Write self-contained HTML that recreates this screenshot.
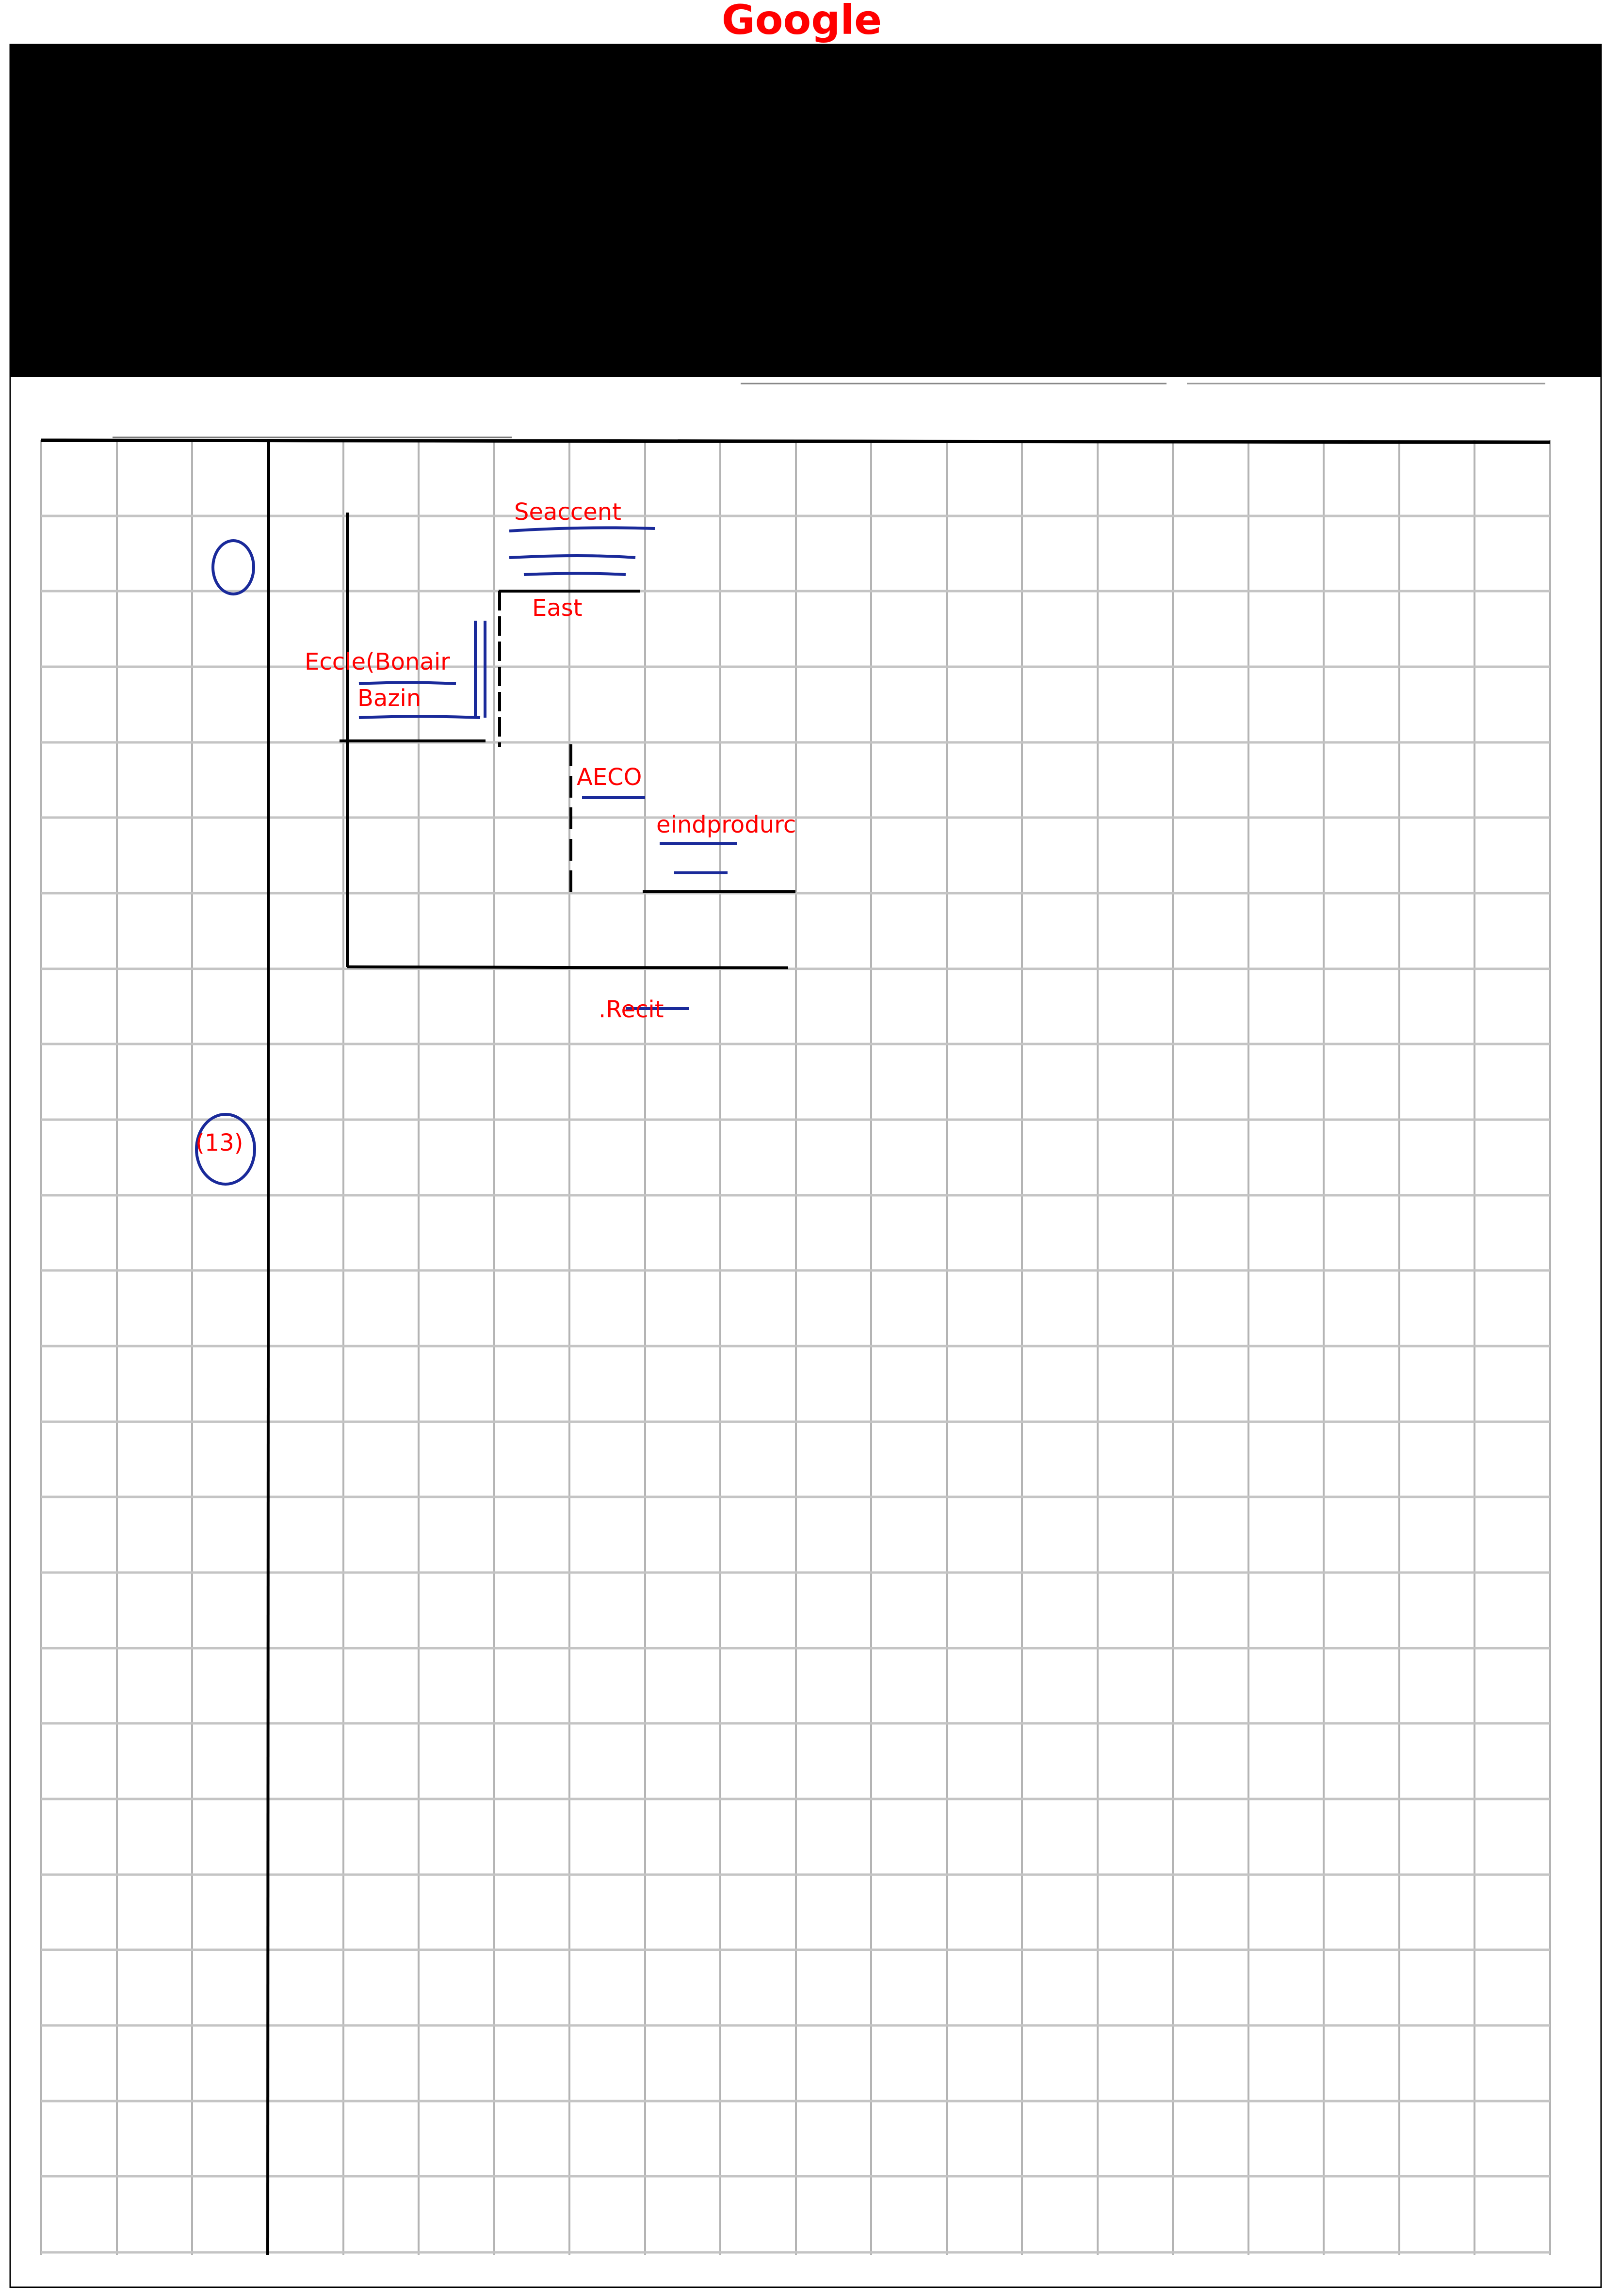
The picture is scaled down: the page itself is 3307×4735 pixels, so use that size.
<!DOCTYPE html>
<html><head><meta charset="utf-8">
<style>
html,body{margin:0;padding:0;background:#fff;width:3307px;height:4735px;overflow:hidden}
svg{display:block}
</style></head>
<body>
<svg width="3307" height="4735" viewBox="0 0 3307 4735" xmlns="http://www.w3.org/2000/svg">
<rect width="3307" height="4735" fill="#fff"/>
<text x="1653" y="70" text-anchor="middle" font-family="DejaVu Sans, Liberation Sans, sans-serif" font-weight="bold" font-size="84" fill="#ff0000">Google</text>
<!-- frame -->
<rect x="21" y="92" width="3280" height="4625" fill="none" stroke="#000" stroke-width="3"/>
<rect x="21" y="92" width="3280" height="685" fill="#000"/>
<!-- header residual lines -->
<line x1="1527" y1="791" x2="2405" y2="791" stroke="#888" stroke-width="3"/>
<line x1="2447" y1="791" x2="3186" y2="791" stroke="#999" stroke-width="3"/>
<line x1="232" y1="902" x2="1055" y2="902" stroke="#777" stroke-width="3"/>
<!-- grid -->
<g stroke="#b4b4b4" stroke-width="4" id="grid">
<line x1="85" y1="908" x2="85" y2="4650"/><line x1="241" y1="908" x2="241" y2="4650"/><line x1="396" y1="908" x2="396" y2="4650"/>
<line x1="708" y1="908" x2="708" y2="4650"/><line x1="863" y1="908" x2="863" y2="4650"/><line x1="1019" y1="908" x2="1019" y2="4650"/>
<line x1="1174" y1="908" x2="1174" y2="4650"/><line x1="1330" y1="908" x2="1330" y2="4650"/><line x1="1485" y1="908" x2="1485" y2="4650"/>
<line x1="1641" y1="908" x2="1641" y2="4650"/><line x1="1796" y1="908" x2="1796" y2="4650"/><line x1="1952" y1="908" x2="1952" y2="4650"/>
<line x1="2107" y1="908" x2="2107" y2="4650"/><line x1="2263" y1="908" x2="2263" y2="4650"/><line x1="2418" y1="908" x2="2418" y2="4650"/>
<line x1="2574" y1="908" x2="2574" y2="4650"/><line x1="2729" y1="908" x2="2729" y2="4650"/><line x1="2885" y1="908" x2="2885" y2="4650"/>
<line x1="3040" y1="908" x2="3040" y2="4650"/><line x1="3196" y1="908" x2="3196" y2="4650"/>
</g>
<g stroke="#c4c4c4" stroke-width="5">
<line x1="85" y1="1064" x2="3196" y2="1064"/><line x1="85" y1="1219" x2="3196" y2="1219"/><line x1="85" y1="1375" x2="3196" y2="1375"/>
<line x1="85" y1="1531" x2="3196" y2="1531"/><line x1="85" y1="1686" x2="3196" y2="1686"/><line x1="85" y1="1842" x2="3196" y2="1842"/>
<line x1="85" y1="1998" x2="3196" y2="1998"/><line x1="85" y1="2153" x2="3196" y2="2153"/><line x1="85" y1="2309" x2="3196" y2="2309"/>
<line x1="85" y1="2465" x2="3196" y2="2465"/><line x1="85" y1="2620" x2="3196" y2="2620"/><line x1="85" y1="2776" x2="3196" y2="2776"/>
<line x1="85" y1="2932" x2="3196" y2="2932"/><line x1="85" y1="3087" x2="3196" y2="3087"/><line x1="85" y1="3243" x2="3196" y2="3243"/>
<line x1="85" y1="3399" x2="3196" y2="3399"/><line x1="85" y1="3554" x2="3196" y2="3554"/><line x1="85" y1="3710" x2="3196" y2="3710"/>
<line x1="85" y1="3866" x2="3196" y2="3866"/><line x1="85" y1="4021" x2="3196" y2="4021"/><line x1="85" y1="4177" x2="3196" y2="4177"/>
<line x1="85" y1="4333" x2="3196" y2="4333"/><line x1="85" y1="4488" x2="3196" y2="4488"/><line x1="85" y1="4645" x2="3196" y2="4645"/>
</g>
<line x1="85" y1="908" x2="3196" y2="912" stroke="#000" stroke-width="7"/>
<line x1="554" y1="905" x2="552" y2="4650" stroke="#000" stroke-width="6"/>
<!-- drawn diagram -->
<g stroke="#000" stroke-width="6" fill="none">
<line x1="716" y1="1057" x2="716" y2="1994"/>
<line x1="700" y1="1528" x2="1001" y2="1528"/>
<line x1="1028" y1="1219" x2="1319" y2="1219"/>
<line x1="1030" y1="1219" x2="1030" y2="1540" stroke-dasharray="40 12"/>
<line x1="1177" y1="1535" x2="1177" y2="1849" stroke-dasharray="45 20"/>
<line x1="1325" y1="1839" x2="1640" y2="1839"/>
<line x1="716" y1="1994" x2="1625" y2="1996"/>
</g>
<!-- handwriting hints -->
<g stroke="#1a2a9a" stroke-width="6" fill="none">
<ellipse cx="481" cy="1170" rx="42" ry="55"/>
<ellipse cx="465" cy="2370" rx="60" ry="72"/>
<path d="M1050 1095 q150 -10 300 -5 M1050 1150 q150 -8 260 0 M1080 1185 q120 -5 210 0"/>
<path d="M980 1280 v200 M1000 1280 v200"/>
<path d="M740 1410 q100 -5 200 0 M740 1480 q120 -5 250 0"/>
<path d="M1200 1645 h130 M1360 1740 h160 M1390 1800 h110"/>
<path d="M1290 2080 h130"/>
</g>
<!-- labels -->
<g font-family="DejaVu Sans, Liberation Sans, sans-serif" font-size="48" fill="#ff0000">
<text x="1060" y="1072">Seaccent</text>
<text x="1097" y="1270">East</text>
<text x="628" y="1381">Eccle(Bonair</text>
<text x="737" y="1456">Bazin</text>
<text x="1189" y="1619">AECO</text>
<text x="1353" y="1717">eindprodurc</text>
<text x="1234" y="2098">.Recit</text>
<text x="403" y="2373">(13)</text>
</g>
</svg>
</body></html>
